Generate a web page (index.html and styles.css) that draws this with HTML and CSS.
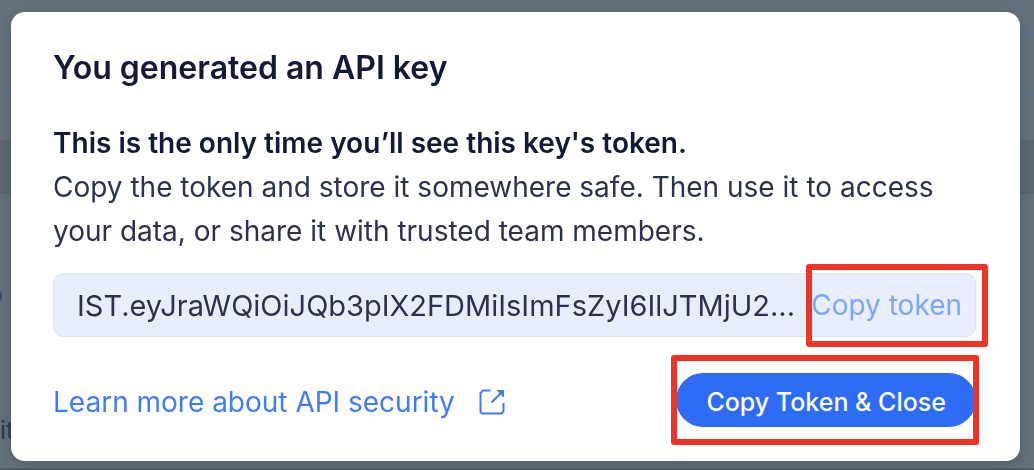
FILE: index.html
```html
<!DOCTYPE html>
<html lang="en">
<head>
<meta charset="utf-8">
<meta name="viewport" content="width=device-width, initial-scale=1">
<title>API key</title>
<link rel="stylesheet" href="styles.css">
</head>
<body>
<div class="page" aria-hidden="true">
  <div class="page-top"></div>
  <div class="page-bar"></div>
  <div class="page-space"></div>
  <div class="page-band"></div>
  <div class="page-body"><span class="page-dot"></span><span class="page-text">it</span></div>
</div>
<div class="overlay">
  <section class="dialog" role="dialog" aria-labelledby="title">
    <h1 class="title" id="title">You generated an API key</h1>
    <div class="message">
      <p class="lead">This is the only time you’ll see this key's token.</p>
      <p class="copy">Copy the token and store it somewhere safe. Then use it to access your data, or share it with trusted team members.</p>
    </div>
    <div class="field">
      <input class="token" type="text" readonly aria-label="Token" value="IST.eyJraWQiOiJQb3pIX2FDMiIsImFsZyI6IlJTMjU2...">
      <div class="marked marked-token"><button class="copy-token" type="button">Copy token</button></div>
    </div>
    <div class="footer">
      <a class="link" href="#">Learn more about API security
        <svg class="icon" viewBox="0 0 26 26" fill="none" stroke="currentColor" stroke-width="2" stroke-linejoin="round" aria-hidden="true"><path d="M11.500 1.500H4L1.500 4V23L3 24.500H22.500L24.500 22.500V14M12.500 13.500 24 2"/><path d="M18 1.500h6.500V8L21.500 4.500Z" fill="currentColor" stroke-width="1"/></svg>
      </a>
      <div class="marked marked-close"><button class="primary" type="button">Copy Token &amp; Close</button></div>
    </div>
  </section>
</div>
</body>
</html>
```
FILE: styles.css
```css
* { box-sizing: border-box; }
body {
  margin: 0;
  color: #131938;
  font-family: Inter, "Liberation Sans", sans-serif;
}
.page {
  display: flex;
  flex-direction: column;
  height: 100vh;
  overflow: hidden;
  background: #65727b;
}
.page-top { height: 34px; border-bottom: 1px solid #586f88; }
.page-bar { height: 62px; border-bottom: 1px solid #586f88; }
.page-space { height: 44px; }
.page-band { height: 54px; background: #5b6872; }
.page-body {
  display: flex;
  flex-direction: column;
  flex: 1;
  gap: 110px;
  padding-top: 94px;
  border-bottom: 2px solid #505e6a;
}
.page-dot {
  width: 16px;
  height: 16px;
  margin-left: -14px;
  border-radius: 50%;
  background: #2c4a73;
}
.page-text { font-size: 25px; line-height: 32px; color: #2b3850; }
.overlay {
  position: fixed;
  inset: 0;
  display: flex;
  align-items: flex-start;
  padding: 12px 14px 9px 11px;
}
.dialog {
  flex: 1;
  padding: 36px 44px 34px 42px;
  border-radius: 14px;
  background: #fff;
  box-shadow: 0 4px 14px rgba(30, 45, 60, 0.3);
}
.title { margin: 0; font-size: 32px; font-weight: 600; line-height: 40px; }
.message { margin-top: 33px; font-size: 28px; line-height: 44px; }
.lead, .copy { margin: 0; }
.lead { font-weight: 600; }
.copy { color: #2b3150; }
.field {
  display: flex;
  align-items: center;
  height: 64px;
  margin-top: 20px;
  padding: 0 13px 0 23px;
  border: 1px solid #dfe5ec;
  border-radius: 10px;
  background: #e7effe;
}
.token {
  flex: 1;
  min-width: 0;
  padding: 0;
  border: 0;
  outline: 0;
  background: none;
  color: #2b3150;
  font: inherit;
  font-size: 29px;
}
.marked { position: relative; }
.marked::after {
  content: "";
  position: absolute;
  border: 6px solid #ed3426;
  border-radius: 3px;
  pointer-events: none;
}
.marked-token::after { inset: -21px -26px -22px -5px; }
.marked-close::after { inset: -18px -3px -18px -5px; }
.copy-token {
  padding: 0;
  border: 0;
  background: none;
  color: #7da6fa;
  font: inherit;
  font-size: 28px;
  line-height: 40px;
}
.footer {
  display: flex;
  align-items: center;
  justify-content: space-between;
  margin-top: 36px;
}
.link {
  display: flex;
  align-items: center;
  gap: 24px;
  padding-top: 3px;
  color: #417cf8;
  font-size: 28px;
  line-height: 40px;
  text-decoration: none;
}
.icon { width: 26px; height: 26px; }
.primary {
  height: 54px;
  padding: 3px 30px 0;
  border: 0;
  border-radius: 27px;
  background: #2f6cf6;
  color: #fff;
  font: inherit;
  font-size: 25px;
  font-weight: 500;
}
```
